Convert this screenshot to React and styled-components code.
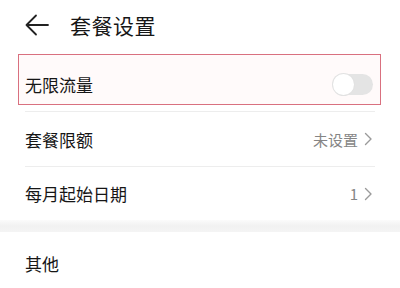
import React, { useState } from "react";
import styled, { createGlobalStyle } from "styled-components";

const Global = createGlobalStyle`
  html, body { margin: 0; padding: 0; background: #ffffff; }
  body { font-family: "Noto Sans CJK SC", "Noto Sans", sans-serif; }
`;

const Page = styled.div`
  width: 400px;
  height: 288px;
  overflow: hidden;
  background: #ffffff;
  display: flex;
  flex-direction: column;
`;

const Header = styled.div`
  height: 57px;
  flex-shrink: 0;
  display: flex;
  align-items: center;
  padding: 0 0 7px 25px;
  gap: 21px;
  box-sizing: border-box;
`;

const BackButton = styled.button`
  border: none;
  background: none;
  padding: 0;
  width: 24px;
  height: 24px;
  display: flex;
  align-items: center;
  justify-content: center;
  color: #222;
`;

const Title = styled.div`
  font-size: 21px;
  color: #161616;
  letter-spacing: 0.5px;
  line-height: 1;
`;

const Section = styled.div`
  display: flex;
  flex-direction: column;
  padding: 0 25px;
`;

const Row = styled.div`
  position: relative;
  height: ${(p) => (p.$last ? "53px" : "55px")};
  flex-shrink: 0;
  display: flex;
  align-items: center;
  justify-content: space-between;
  border-bottom: ${(p) => (p.$last ? "none" : "1px solid #ededed")};
  box-sizing: border-box;
`;

const Highlight = styled.div`
  position: absolute;
  left: -7px;
  right: -6px;
  top: -3px;
  bottom: 6px;
  border: 1.5px solid #d9707f;
  background: rgba(255, 235, 235, 0.25);
  pointer-events: none;
`;

const Label = styled.div`
  font-size: 17px;
  color: #161616;
  line-height: 1;
  position: relative;
`;

const Value = styled.div`
  display: flex;
  align-items: center;
  gap: 6px;
  font-size: 15px;
  color: #858585;
  line-height: 1;
  margin-right: 2px;
`;

const Track = styled.div`
  position: relative;
  width: 40px;
  height: 21px;
  border-radius: 11px;
  background: #e4e4e4;
  margin-right: 2px;
`;

const Knob = styled.div`
  position: absolute;
  left: 0;
  top: 0;
  width: 21px;
  height: 21px;
  border-radius: 50%;
  background: #ffffff;
  box-shadow: 0 0 0 1px #e2e2e2;
`;

const Band = styled.div`
  height: 12px;
  flex-shrink: 0;
  background: linear-gradient(#fbfbfb, #f1f1f1 50%, #f4f4f4);
`;

const Footer = styled.div`
  height: 62px;
  flex-shrink: 0;
  display: flex;
  align-items: center;
  padding: 0 25px;
  box-sizing: border-box;
`;

const Chevron = () => (
  <svg width="9" height="14" viewBox="0 0 9 14" fill="none">
    <path d="M1.5 1.5 L7 7 L1.5 12.5" stroke="#9a9a9a" strokeWidth="1.4" strokeLinecap="round" strokeLinejoin="round" />
  </svg>
);

const BackArrow = () => (
  <svg width="24" height="22" viewBox="0 0 24 22" fill="none">
    <path d="M11 1.5 L1.5 11 L11 20.5 M1.5 11 H23" stroke="#222" strokeWidth="1.8" strokeLinecap="round" strokeLinejoin="round" />
  </svg>
);

export default function App() {
  const [on] = useState(false);
  return (
    <>
      <Global />
      <Page>
        <Header>
          <BackButton aria-label="back">
            <BackArrow />
          </BackButton>
          <Title>套餐设置</Title>
        </Header>
        <Section>
          <Row>
            <Highlight />
            <Label>无限流量</Label>
            <Track>
              <Knob style={{ left: on ? 19 : 0 }} />
            </Track>
          </Row>
          <Row>
            <Label>套餐限额</Label>
            <Value>
              未设置
              <Chevron />
            </Value>
          </Row>
          <Row $last>
            <Label>每月起始日期</Label>
            <Value>
              1
              <Chevron />
            </Value>
          </Row>
        </Section>
        <Band />
        <Footer>
          <Label>其他</Label>
        </Footer>
      </Page>
    </>
  );
}
